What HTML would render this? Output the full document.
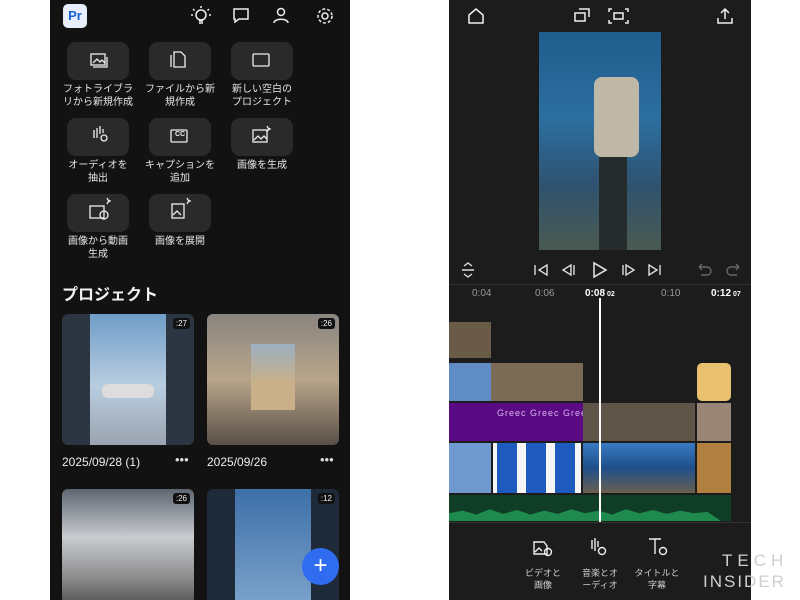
<!DOCTYPE html>
<html><head><meta charset="utf-8"><style>
*{margin:0;padding:0;box-sizing:border-box}
body{width:800px;height:600px;background:#fff;position:relative;overflow:hidden;font-family:"Liberation Sans","Noto Sans CJK JP",sans-serif;color:#ddd}
.a{position:absolute}
.L{left:50px;top:0;width:300px;height:600px;background:#121212;overflow:hidden}
.R{left:449px;top:0;width:302px;height:600px;background:#1c1c1c;overflow:hidden}
.btn{position:absolute;width:62px;height:38px;background:#2a2a2a;border-radius:9px}
.lab{position:absolute;width:84px;text-align:center;font-size:10px;line-height:13px;color:#e6e6e6}
.ic{position:absolute;color:#eee;font-size:14px;text-align:center}
.th{position:absolute;border-radius:6px;overflow:hidden;background:#3a3a3a}
.dur{position:absolute;right:4px;top:4px;background:#111;color:#eee;font-size:8px;padding:1px 3px;border-radius:3px}
.tick{position:absolute;top:288px;font-size:10px;color:#999}
</style></head><body>
<div class="a L">
 <div class="a" style="left:13px;top:4px;width:24px;height:24px;background:#e8eefc;border-radius:5px;color:#1560d6;font-weight:bold;font-size:13px;text-align:center;line-height:24px">Pr</div>
 <svg class="a" style="left:140px;top:5px" width="150" height="22" fill="none" stroke="#eee" stroke-width="1.5">
  <circle cx="11" cy="10" r="5"/><path d="M9 16h4M9 18h4M11 1v2M3 4l1.5 1.5M19 4l-1.5 1.5M1 10h2M19 10h2"/>
  <path d="M44 4h14v10h-9l-4 3v-3h-1z"/>
  <circle cx="91" cy="7" r="3.5"/><path d="M84 18c0-5 14-5 14 0"/>
  <circle cx="135" cy="11" r="3"/><circle cx="135" cy="11" r="7" stroke-dasharray="3 2"/>
 </svg>
 <div class="btn" style="left:17px;top:42px"></div><div class="btn" style="left:99px;top:42px"></div><div class="btn" style="left:181px;top:42px"></div>
 <div class="btn" style="left:17px;top:118px"></div><div class="btn" style="left:99px;top:118px"></div><div class="btn" style="left:181px;top:118px"></div>
 <div class="btn" style="left:17px;top:194px"></div><div class="btn" style="left:99px;top:194px"></div>
 <svg class="a" style="left:17px;top:42px" width="226" height="190" fill="none" stroke="#eee" stroke-width="1.3">
  <rect x="24" y="12" width="14" height="11"/><path d="M26 21l4-4 3 3 2-2 3 3M40 15v10h-14"/>
  <path d="M107 10h7l4 4v11h-11z"/><path d="M104 13v12"/>
  <rect x="186" y="12" width="16" height="12" rx="1"/>
  <path d="M27 88v8M30 86v10M33 84v8M36 87v4"/><circle cx="37" cy="96" r="3"/>
  <rect x="104" y="88" width="16" height="12" rx="1"/>
  <rect x="186" y="88" width="14" height="12"/><path d="M187 98l4-4 3 3 3-3 3 3M200 84l1 2 2 1-2 1-1 2"/>
  <rect x="23" y="164" width="14" height="12"/><circle cx="37" cy="173" r="4"/><path d="M40 156l1 2 2 1-2 1-1 2"/>
  <rect x="105" y="162" width="12" height="14"/><path d="M106 173l4-4 4 4M120 156l1 2 2 1-2 1-1 2"/>
 </svg>
 <div class="a" style="left:125px;top:131px;font-size:7px;color:#eee;font-weight:bold">CC</div>
 <div class="lab" style="left:6px;top:83px">フォトライブラ<br>リから新規作成</div>
 <div class="lab" style="left:88px;top:83px">ファイルから新<br>規作成</div>
 <div class="lab" style="left:170px;top:83px">新しい空白の<br>プロジェクト</div>
 <div class="lab" style="left:6px;top:159px">オーディオを<br>抽出</div>
 <div class="lab" style="left:88px;top:159px">キャプションを<br>追加</div>
 <div class="lab" style="left:170px;top:159px">画像を生成</div>
 <div class="lab" style="left:6px;top:235px">画像から動画<br>生成</div>
 <div class="lab" style="left:88px;top:235px">画像を展開</div>
 <div class="a" style="left:12px;top:281px;font-size:16px;font-weight:bold;color:#f2f2f2">プロジェクト</div>
 <div class="th" style="left:12px;top:314px;width:132px;height:131px;background:#2c3642"><div class="a" style="left:28px;top:0;width:76px;height:131px;background:linear-gradient(#6f9dc8,#b9cde0 55%,#9aa4b0)"></div><div class="a" style="left:40px;top:70px;width:52px;height:14px;background:#ddd;border-radius:6px"></div><div class="dur">:27</div></div>
 <div class="th" style="left:157px;top:314px;width:132px;height:131px;background:linear-gradient(#8a8580,#b8a58a 50%,#5a5048)"><div class="a" style="left:44px;top:30px;width:44px;height:66px;background:linear-gradient(#9bb0c0,#c9b088 60%)"></div><div class="dur">:26</div></div>
 <div class="a" style="left:12px;top:455px;font-size:12px;color:#eee">2025/09/28 (1)</div><div class="a" style="left:125px;top:452px;font-size:13px;color:#ddd">•••</div>
 <div class="a" style="left:157px;top:455px;font-size:12px;color:#eee">2025/09/26</div><div class="a" style="left:270px;top:452px;font-size:13px;color:#ddd">•••</div>
 <div class="th" style="left:12px;top:489px;width:132px;height:120px;background:linear-gradient(#5d6670,#c9ccd0 40%,#8a8a8a 75%,#4a4a4a)"><div class="dur">:26</div></div>
 <div class="th" style="left:157px;top:489px;width:132px;height:120px;background:#1e2a38"><div class="a" style="left:28px;top:0;width:76px;height:120px;background:linear-gradient(#3d6fa8,#7ea4cc)"></div><div class="dur">:12</div></div>
 <div class="a" style="left:252px;top:548px;width:37px;height:37px;border-radius:50%;background:#2f6cf0;color:#fff;font-size:24px;text-align:center;line-height:35px">+</div>
</div>
<div class="a R">
 <svg class="a" style="left:18px;top:6px" width="270" height="20" fill="none" stroke="#eee" stroke-width="1.5">
  <path d="M2 9l7-6 7 6v8H2z"/><path d="M108 7h10v8h-10zM112 3h10v8"/><path d="M145 3h-3v3M158 3h3v3M145 17h-3v-3M158 17h3v-3M147 7h9v6h-9z"/><path d="M258 3v10M254 7l4-4 4 4M251 12v5h14v-5"/>
 </svg>
 <div class="a" style="left:90px;top:32px;width:122px;height:218px;background:linear-gradient(#1f5d8c,#2c6fa0 40%,#2f5270 70%,#4a5a50)"><div class="a" style="left:55px;top:45px;width:45px;height:80px;background:#c0b8a6;border-radius:8px"></div><div class="a" style="left:60px;top:125px;width:28px;height:93px;background:#262b2c"></div></div>
 <svg class="a" style="left:10px;top:260px" width="290" height="20" fill="none" stroke="#ddd" stroke-width="1.4">
  <path d="M5 6l4-3 4 3M5 14l4 3 4-3M3 10h12"/>
  <path d="M76 5v10M88 5l-8 5 8 5z"/>
  <path d="M112 5l-8 5 8 5zM115 5v10"/>
  <path d="M135 3l12 7-12 7z" stroke-width="1.6"/>
  <path d="M164 5v10M167 5l8 5-8 5z"/>
  <path d="M190 5l8 5-8 5zM201 5v10"/>
  <path stroke="#666" d="M240 7h8a4 4 0 010 8h-6M240 7l3-3M240 7l3 3M280 7h-8a4 4 0 000 8h6M280 7l-3-3M280 7l-3 3"/>
 </svg>
 <div class="a" style="left:0;top:284px;width:302px;height:1px;background:#333"></div>
 <div class="tick" style="left:23px">0:04</div><div class="tick" style="left:86px">0:06</div><div class="tick" style="left:136px;color:#fff;font-weight:bold">0:08<span style="font-size:7px"> 02</span></div><div class="tick" style="left:212px">0:10</div><div class="tick" style="left:262px;color:#fff;font-weight:bold">0:12<span style="font-size:7px"> 07</span></div>
 <div class="a" style="left:0;top:322px;width:42px;height:36px;background:#6a5a48"></div>
 <div class="a" style="left:0;top:363px;width:42px;height:38px;background:#5f8cc4"></div>
 <div class="a" style="left:42px;top:363px;width:92px;height:38px;background:#7a6a56"></div>
 <div class="a" style="left:248px;top:363px;width:34px;height:38px;background:#e8c070;border-radius:5px"></div>
 <div class="a" style="left:0;top:403px;width:134px;height:38px;background:#5a0a82"></div>
 <div class="a" style="left:48px;top:408px;font-size:9px;color:#d9b3f0;letter-spacing:1px">Greec&nbsp;Greec&nbsp;Greece</div>
 <div class="a" style="left:134px;top:403px;width:112px;height:38px;background:#5e5448"></div>
 <div class="a" style="left:248px;top:403px;width:34px;height:38px;background:#9a8676"></div>
 <div class="a" style="left:0;top:443px;width:42px;height:50px;background:#6f9ad0"></div>
 <div class="a" style="left:44px;top:443px;width:88px;height:50px;background:repeating-linear-gradient(90deg,#f5f5f5 0 4px,#1f5bbf 4px 24px,#f5f5f5 24px 29px)"></div>
 <div class="a" style="left:134px;top:443px;width:112px;height:50px;background:linear-gradient(#3a7ac4,#1e4f8a 50%,#6a6050)"></div>
 <div class="a" style="left:248px;top:443px;width:34px;height:50px;background:#b08040"></div>
 <div class="a" style="left:0;top:495px;width:282px;height:26px;background:#0f3d25"></div>
 <div class="a" style="left:0;top:508px;width:272px;height:13px;background:#1f8a4e;clip-path:polygon(0 40%,5% 20%,10% 50%,15% 10%,20% 45%,25% 15%,30% 50%,35% 20%,40% 45%,45% 10%,50% 40%,55% 20%,60% 50%,65% 10%,70% 40%,75% 15%,80% 45%,85% 20%,90% 40%,95% 30%,100% 100%,0 100%)"></div>
 <div class="a" style="left:150px;top:298px;width:2px;height:224px;background:#fff"></div>
 <div class="a" style="left:0;top:522px;width:302px;height:1px;background:#333"></div>
 <svg class="a" style="left:80px;top:535px" width="150" height="22" fill="none" stroke="#eee" stroke-width="1.4">
  <path d="M5 7h10l3 4v8H5zM6 17l4-4 3 3"/><circle cx="19" cy="17" r="3.5"/>
  <path d="M63 5v9M66 3v13M69 6v6"/><circle cx="73" cy="16" r="3.5"/>
  <path d="M120 4h12M126 4v15"/><circle cx="134" cy="16" r="3.5"/>
 </svg>
 <div class="lab" style="left:52px;top:567px;width:84px;font-size:9px;line-height:12px;color:#ccc">ビデオと<br>画像</div>
 <div class="lab" style="left:109px;top:567px;width:84px;font-size:9px;line-height:12px;color:#ccc">音楽とオ<br>ーディオ</div>
 <div class="lab" style="left:166px;top:567px;width:84px;font-size:9px;line-height:12px;color:#ccc">タイトルと<br>字幕</div>
</div>
<div class="a" style="left:722px;top:551px;font-size:17px;color:#cfcfcf;letter-spacing:5px">TECH</div>
<div class="a" style="left:703px;top:572px;font-size:17px;color:#cfcfcf;letter-spacing:2px">INSIDER</div>
</body></html>
